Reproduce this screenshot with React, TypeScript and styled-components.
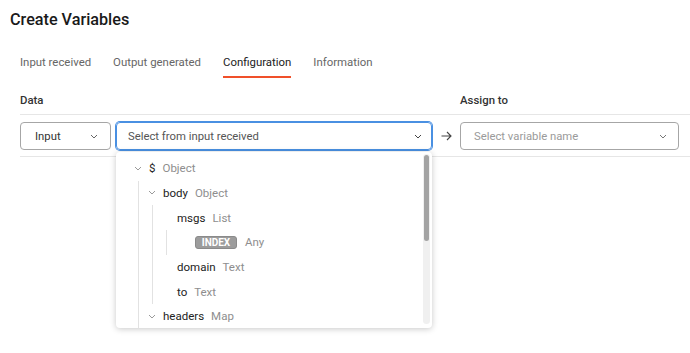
import styled, { createGlobalStyle } from "styled-components";

const GlobalStyle = createGlobalStyle`
  body {
    margin: 0;
    background: #ffffff;
    font-family: Roboto, "Noto Sans", sans-serif;
    color: #222;
  }
`

const Page = styled.div`
  width: 690px;
  height: 353px;
  position: relative;
  overflow: hidden;
`
const Title = styled.h1`
  margin: 0;
  padding: 10px 0 0 10px;
  font-size: 16.2px;
  line-height: 20px;
  font-weight: 500;
  color: #1a1a1a;
`
const Tabs = styled.div`
  display: flex;
  gap: 22px;
  padding: 24px 0 0 20px;
`
const Tab = styled.div<{ $active?: boolean }>`
  font-size: 11.4px;
  line-height: 16px;
  padding-bottom: 6px;
  color: ${(p) => (p.$active ? "#222" : "#666")};
  border-bottom: 2px solid ${(p) => (p.$active ? "#f0502a" : "transparent")};
`
const Section = styled.div`
  padding-left: 20px;
  margin-top: 14px;
`
const HeaderRow = styled.div`
  display: flex;
  padding-bottom: 6px;
  border-bottom: 1px solid #e6e6e6;
`
const HeaderLabel = styled.div<{ $width?: number }>`
  width: ${(p) => (p.$width ? `${p.$width}px` : "auto")};
  font-size: 11.4px;
  line-height: 16px;
  font-weight: 500;
  color: #333;
`
const FieldRow = styled.div`
  display: flex;
  align-items: center;
  padding: 7px 0 6px;
  border-bottom: 1px solid #e6e6e6;
`
const SelectBox = styled.div<{ $width: number; $focused?: boolean; $pad: number }>`
  position: relative;
  box-sizing: border-box;
  width: ${(p) => p.$width}px;
  height: 28px;
  margin-right: ${(p) => (p.$focused ? 0 : 5)}px;
  display: flex;
  align-items: center;
  justify-content: space-between;
  padding: 0 ${(p) => p.$pad - 2}px 0 ${(p) => p.$pad}px;
  border: 1px solid ${(p) => (p.$focused ? "#4a90e2" : "#a6a6a6")};
  box-shadow: ${(p) => (p.$focused ? "0 0 0 1px #4a90e2" : "none")};
  border-radius: 4px;
  font-size: 11.3px;
`
const SelectText = styled.span<{ $tone: "value" | "hint" | "muted" }>`
  color: ${(p) => (p.$tone === "value" ? "#333" : p.$tone === "hint" ? "#555" : "#9a9a9a")};
`
const ArrowBox = styled.div`
  width: 28px;
  display: flex;
  justify-content: center;
  color: #444;
`
const Dropdown = styled.div`
  position: absolute;
  top: 29px;
  left: -1px;
  width: 316px;
  height: 176px;
  box-sizing: border-box;
  padding: 4px 0 0 16px;
  background: #fff;
  border-radius: 4px;
  box-shadow: 0 1px 6px rgba(0, 0, 0, 0.22);
  overflow: hidden;
  z-index: 5;
`
const ScrollTrack = styled.div`
  position: absolute;
  top: 2px;
  right: 2px;
  bottom: 4px;
  width: 7px;
  border-radius: 4px;
  background: #f0f0f0;
`
const ScrollThumb = styled.div`
  margin: 1px 1px 0;
  height: 86px;
  border-radius: 3px;
  background: #a3a3a3;
`
const NodeRow = styled.div`
  display: flex;
  align-items: center;
  height: 24.67px;
  font-size: 11.5px;
`
const Toggle = styled.span`
  width: 12px;
  display: flex;
  justify-content: center;
  margin-right: 5px;
  color: #9a9a9a;
`
const Key = styled.span`
  color: #222;
  margin-right: 7px;
`
const TypeName = styled.span`
  color: #8e8e8e;
`
const Badge = styled.span`
  box-sizing: border-box;
  margin: 0 8px 0 4px;
  width: 42px;
  text-align: center;
  height: 13px;
  line-height: 11px;
  font-size: 10px;
  font-weight: 700;
  color: #fff;
  background: #9c9c9c;
  border: 1px solid #8a8a8a;
  border-radius: 3px;
`
const Children = styled.div`
  margin-left: 6px;
  padding-left: 7px;
  border-left: 1px solid #e2e2e2;
`

function Chevron({ size, color }: { size: number; color: string }) {
  return (
    <svg width={size} height={size / 2 + 1} viewBox="0 0 8 5" fill="none">
      <path d="M1 1 L4 4 L7 1" stroke={color} strokeWidth="1" />
    </svg>
  );
}

interface TreeItem {
  name: string;
  type: string;
  badge?: boolean;
  chevron?: boolean;
  kids?: TreeItem[];
}

const tree: TreeItem = {
  name: "$",
  type: "Object",
  chevron: true,
  kids: [
    {
      name: "body",
      type: "Object",
      chevron: true,
      kids: [
        { name: "msgs", type: "List", kids: [{ name: "INDEX", type: "Any", badge: true }] },
        { name: "domain", type: "Text" },
        { name: "to", type: "Text" },
      ],
    },
    { name: "headers", type: "Map", chevron: true },
  ],
};

function TreeNode({ item }: { item: TreeItem }) {
  return (
    <div>
      <NodeRow>
        <Toggle>{item.chevron ? <Chevron size={8} color="#9a9a9a" /> : null}</Toggle>
        {item.badge ? <Badge>{item.name}</Badge> : <Key>{item.name}</Key>}
        <TypeName>{item.type}</TypeName>
      </NodeRow>
      {item.kids && item.kids.length > 0 && (
        <Children>
          {item.kids.map((k) => (
            <TreeNode key={k.name} item={k} />
          ))}
        </Children>
      )}
    </div>
  );
}

export default function App() {
  return (
    <Page>
      <GlobalStyle />
      <Title>Create Variables</Title>
      <Tabs>
        <Tab>Input received</Tab>
        <Tab>Output generated</Tab>
        <Tab $active>Configuration</Tab>
        <Tab>Information</Tab>
      </Tabs>
      <Section>
        <HeaderRow>
          <HeaderLabel $width={440}>Data</HeaderLabel>
          <HeaderLabel>Assign to</HeaderLabel>
        </HeaderRow>
        <FieldRow>
          <SelectBox $width={91} $pad={14}>
            <SelectText $tone="value">Input</SelectText>
            <Chevron size={8} color="#666" />
          </SelectBox>
          <SelectBox $width={316} $pad={11} $focused>
            <SelectText $tone="hint">Select from input received</SelectText>
            <Chevron size={8} color="#444" />
            <Dropdown>
              <TreeNode item={tree} />
              <ScrollTrack>
                <ScrollThumb />
              </ScrollTrack>
            </Dropdown>
          </SelectBox>
          <ArrowBox>
            <svg width="11" height="10" viewBox="0 0 11 10" fill="none">
              <path d="M0.5 5 H10 M6 1 L10 5 L6 9" stroke="#444" strokeWidth="1.1" />
            </svg>
          </ArrowBox>
          <SelectBox $width={219} $pad={13}>
            <SelectText $tone="muted">Select variable name</SelectText>
            <Chevron size={8} color="#777" />
          </SelectBox>
        </FieldRow>
      </Section>
    </Page>
  );
}
